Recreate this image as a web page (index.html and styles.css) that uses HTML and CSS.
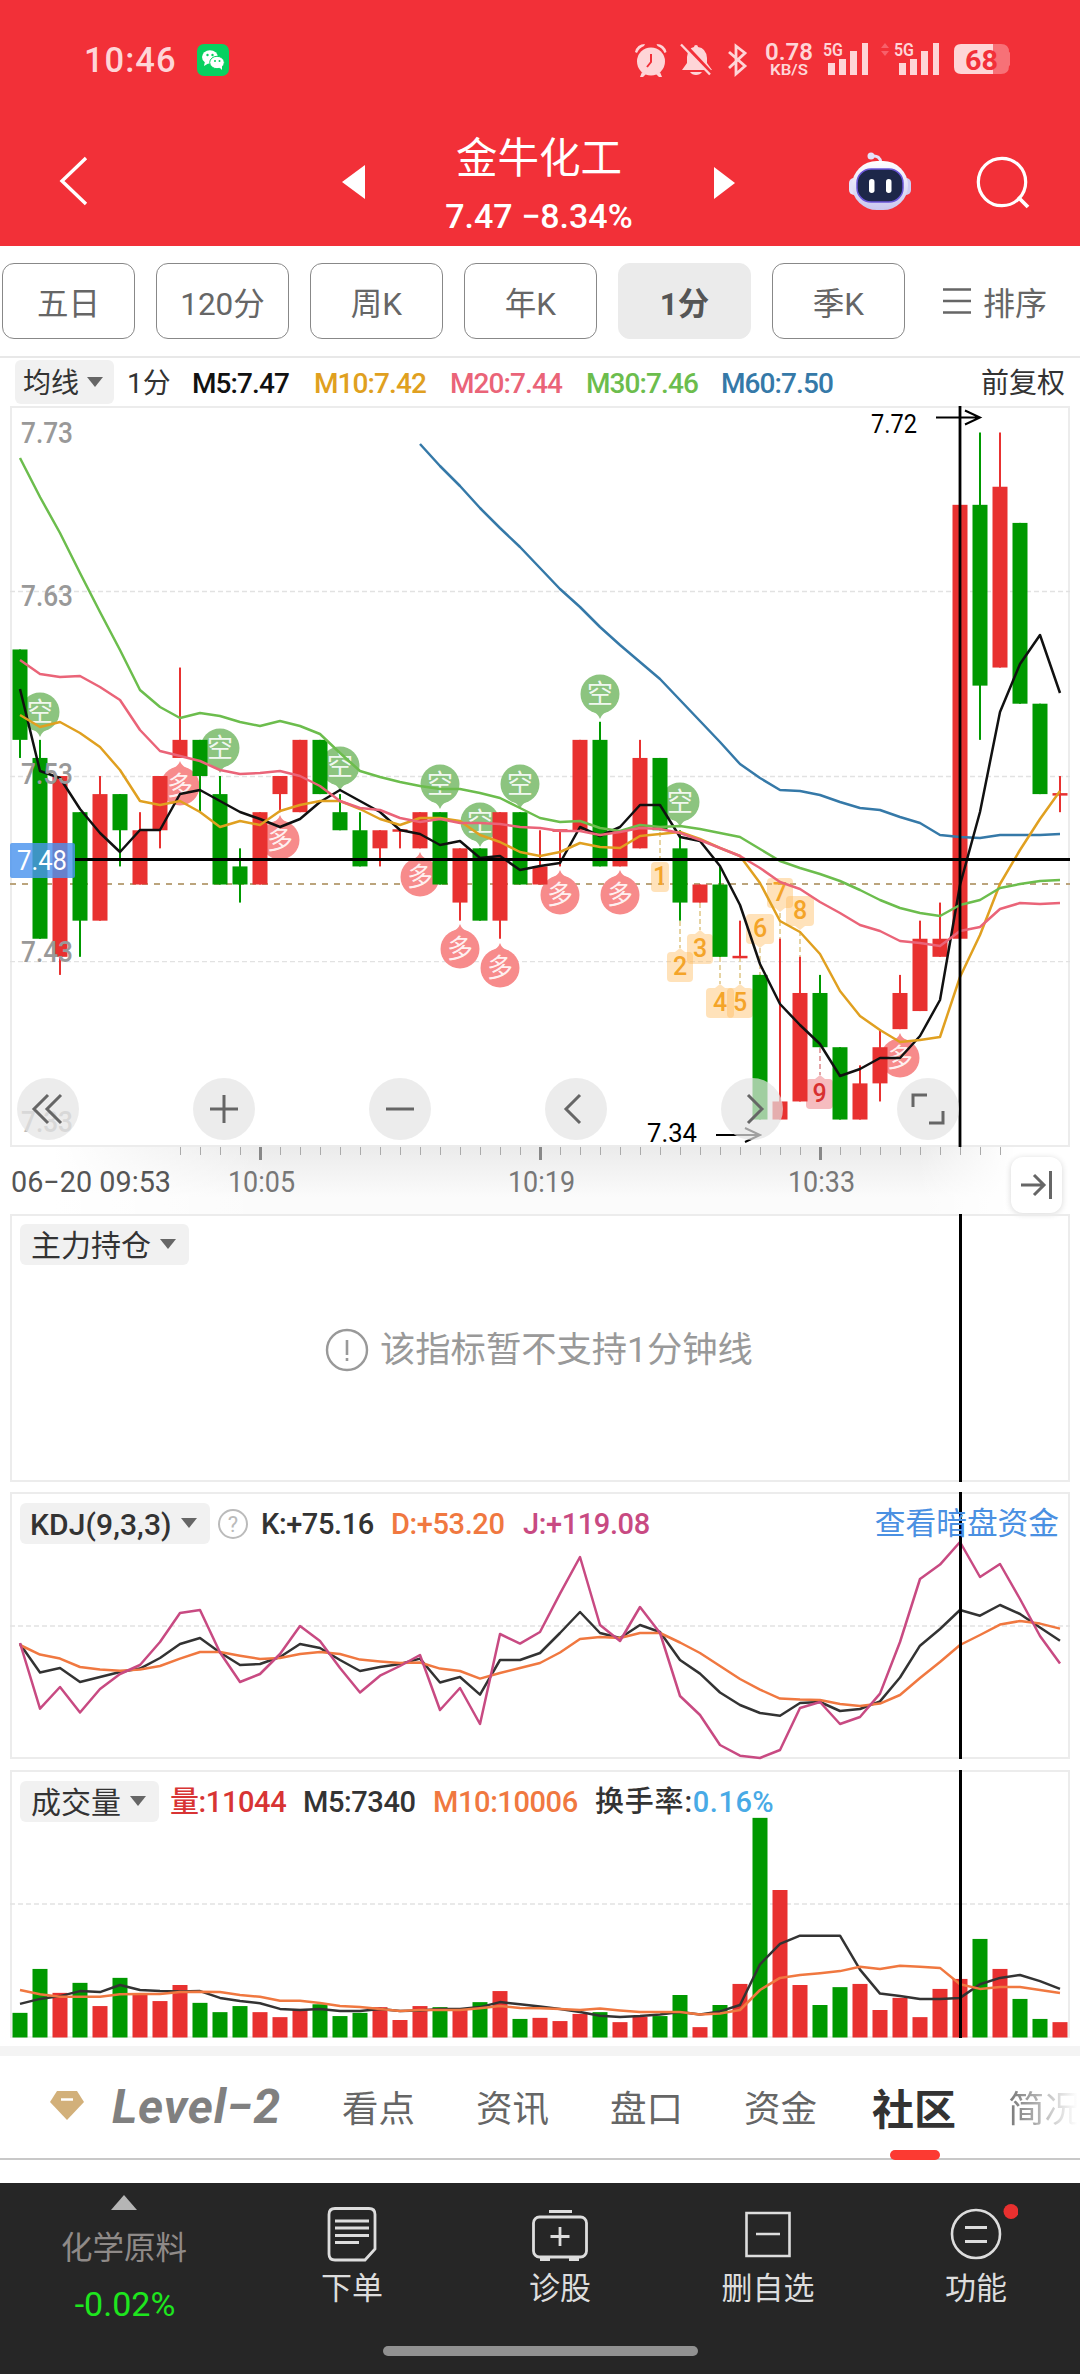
FILE: index.html
```html
<!DOCTYPE html>
<html lang="zh-CN">
<head>
<meta charset="utf-8">
<title>金牛化工 7.47</title>
<link rel="stylesheet" href="styles.css">
</head>
<body>
<div class="app">
  <header class="header">
    <div class="status">
      <span class="clock">10:46</span>
      <svg class="wechat" width="32" height="32" viewBox="0 0 32 32"><rect width="32" height="32" rx="7" fill="#07d160"/><ellipse cx="13" cy="13" rx="8" ry="6.8" fill="#fff"/><path d="M8 17l-1 5 5-3z" fill="#fff"/><ellipse cx="20" cy="18.500" rx="7.300" ry="6.200" fill="#fff" stroke="#07d160" stroke-width="1"/><path d="M22 23l3 3 0-5z" fill="#fff"/><g fill="#07d160"><circle cx="10.500" cy="11" r="1.200"/><circle cx="15.500" cy="11" r="1.200"/><circle cx="18" cy="17" r="1"/><circle cx="22.500" cy="17" r="1"/></g></svg>
      <svg class="signals" width="380" height="44" viewBox="630 40 380 44">
        <g fill="#fed5d7" stroke="none">
          <circle cx="651" cy="62.500" r="14"/>
          <path d="M635 53q2-8 10-8l-1 2q-5 2-7 7zM666.500 53q-2-8-10-8l1 2q5 2 7 7zM642 73l-2 5 3 0 3-3zM660 73l2 5-3 0-3-3z"/>
          <path d="M651 55v8l-4 5" fill="none" stroke="#f23038" stroke-width="2"/>
          <path d="M682 71l5-7v-6q1-9 7-10 0-2 2-2t2 2q8 1 9 11v5l5 7zM690 73h12q-2 3-6 3t-6-3z"/>
          <path d="M683 44l30 32" stroke="#f23038" stroke-width="4"/>
          <path d="M681 45.500l29 30" stroke="#fed5d7" stroke-width="2.400"/>
          <path d="M729 53l16 14-9 8V47l9 7-16 15" fill="none" stroke="#fed5d7" stroke-width="2.800"/>
          <text x="765" y="61" font-size="24" font-weight="600" textLength="48" lengthAdjust="spacingAndGlyphs">0.78</text>
          <text x="770" y="76" font-size="15.500" font-weight="600" textLength="38" lengthAdjust="spacingAndGlyphs">KB/S</text>
          <text x="823" y="57" font-size="18" font-weight="600" textLength="20" lengthAdjust="spacingAndGlyphs">5G</text>
          <path d="M828 64h7v12h-7zM839 60h7v16h-7zM850 52h7v24h-7zM862 44h6v32h-6z"/>
          <text x="894" y="57" font-size="18" font-weight="600" textLength="20" lengthAdjust="spacingAndGlyphs">5G</text>
          <path d="M899 64h7v12h-7zM910 60h7v16h-7zM921 52h7v24h-7zM933 44h6v32h-6z"/>
          <path d="M881 49l4-5 4 5zM881 52h8l-4 5z" fill="#f7606a"/>
          <path d="M962 45h39q8 0 8 8 2 1 2 3v8q0 2-2 3 0 8-8 8h-8z" fill="#f77177"/>
          <path d="M961 45h32v30h-32q-7 0-7-7V52q0-7 7-7z"/>
          <text x="965" y="70.500" font-size="28" font-weight="700" fill="#f23038" textLength="33" lengthAdjust="spacingAndGlyphs">68</text>
        </g>
      </svg>
    </div>
    <div class="titlebar">
      <svg class="back" width="32" height="52" viewBox="0 0 32 52"><path d="M28 3L4 26 28 49" fill="none" stroke="#fff" stroke-width="3.400"/></svg>
      <svg class="prev" width="23" height="34" viewBox="0 0 23 34"><path d="M0 17L23 0v34z" fill="#fff"/></svg>
      <div class="stock"><div class="stock-name">金牛化工</div><div class="stock-price">7.47 −8.34%</div></div>
      <svg class="next" width="21" height="32" viewBox="0 0 21 32"><path d="M21 16L0 0v32z" fill="#fff"/></svg>
      <svg class="robot" width="64" height="60" viewBox="0 0 64 60">
        <defs><linearGradient id="shell" x2="0" y2="1"><stop offset="0" stop-color="#fff"/><stop offset="1" stop-color="#c9c6ef"/></linearGradient></defs>
        <path d="M24 5q8-1 9 7" fill="none" stroke="#e4e2fa" stroke-width="3"/><circle cx="23" cy="5" r="3.500" fill="#e4e2fa"/>
        <rect x="1" y="27" width="10" height="17" rx="5" fill="#e4e2fa"/><rect x="53" y="27" width="10" height="17" rx="5" fill="#cfcdf3"/>
        <rect x="4" y="10" width="56" height="49" rx="25" fill="url(#shell)"/>
        <rect x="9" y="18" width="46" height="33" rx="14" fill="#1d2749" stroke="#6a56d8" stroke-width="1.500"/>
        <rect x="21" y="28" width="5.500" height="14" rx="2.700" fill="#fff"/><rect x="38" y="28" width="5.500" height="14" rx="2.700" fill="#fff"/>
      </svg>
      <svg class="search" width="54" height="54" viewBox="0 0 54 54"><circle cx="26" cy="26" r="23.700" fill="none" stroke="#fff" stroke-width="3.200"/><path d="M42 41l10 10" stroke="#fff" stroke-width="3.800"/></svg>
    </div>
  </header>

  <nav class="periods">
    <button class="period">五日</button>
    <button class="period">120分</button>
    <button class="period">周K</button>
    <button class="period">年K</button>
    <button class="period active">1分</button>
    <button class="period">季K</button>
    <div class="sort"><svg width="28" height="26" viewBox="0 0 28 26"><path d="M0 1.500h28M0 13h28M0 24.500h28" stroke="#666" stroke-width="2.400"/></svg>排序</div>
  </nav>

  <div class="legend ma-legend">
    <span class="pill">均线<i class="caret"></i></span>
    <span class="minute">1分</span>
    <span class="num m5">M5:7.47</span>
    <span class="num m10">M10:7.42</span>
    <span class="num m20">M20:7.44</span>
    <span class="num m30">M30:7.46</span>
    <span class="num m60">M60:7.50</span>
    <span class="adjust">前复权</span>
  </div>

  <section class="panel-main"><svg id="candles" width="1080" height="742" viewBox="0 405 1080 742"></svg></section>

  <div class="axis">
    <svg width="1080" height="66" viewBox="0 1147 1080 66" id="axis"></svg>
    <button class="to-end"><svg width="32" height="28" viewBox="0 0 32 28"><path d="M0 14h22M13 4l10 10-10 10M29.500 0v28" fill="none" stroke="#666" stroke-width="3"/></svg></button>
  </div>

  <section class="panel holding">
    <div class="legend"><span class="pill">主力持仓<i class="caret"></i></span></div>
    <div class="empty"><svg width="44" height="44" viewBox="0 0 44 44"><circle cx="22" cy="22" r="20" fill="none" stroke="#999" stroke-width="2.400"/><path d="M22 12v15M22 30v3" stroke="#999" stroke-width="2.600"/></svg>该指标暂不支持1分钟线</div>
    <div class="crosshair"></div>
  </section>

  <section class="panel kdj">
    <svg class="plot" id="kdj" width="1060" height="268" viewBox="10 1492 1060 268"></svg>
    <div class="legend kdj-legend">
      <span class="pill num">KDJ(9,3,3)<i class="caret"></i></span>
      <span class="help">?</span>
      <span class="num">K:+75.16</span>
      <span class="num orange">D:+53.20</span>
      <span class="num magenta">J:+119.08</span>
    </div>
    <div class="crosshair"></div>
    <a class="link">查看暗盘资金</a>
  </section>

  <section class="panel volume">
    <svg class="plot" id="volume" width="1060" height="268" viewBox="10 1770 1060 268"></svg>
    <div class="legend vol-legend">
      <span class="pill">成交量<i class="caret"></i></span>
      <span class="num red">量:11044</span>
      <span class="num">M5:7340</span>
      <span class="num orange">M10:10006</span>
      <span class="num turnover">换手率:<b>0.16%</b></span>
    </div>
    <div class="crosshair"></div>
  </section>

  <nav class="tabs">
    <svg class="gem" width="36" height="32" viewBox="0 0 36 32"><path d="M8 1h20l7 11-17 18L1 12z" fill="#d2b07a"/><path d="M12 9.500h12" stroke="#fff" stroke-width="2.500"/></svg>
    <span class="level">Level−2</span>
    <span>看点</span><span>资讯</span><span>盘口</span><span>资金</span>
    <span class="current">社区</span>
    <span class="fade">简况</span>
  </nav>

  <footer class="dock">
    <div class="dock-row">
      <div class="sector"><i class="up"></i><span>化学原料</span><b>-0.02%</b></div>
      <div class="item"><svg width="60" height="60" viewBox="0 0 60 60"><path d="M13 4.500h34q6 0 6 6V45L43 56H13q-6 0-6-6V10.500q0-6 6-6zM13 17h34M13 24h34M13 31.500h34M13 38.500h24" fill="none" stroke="#ddd" stroke-width="2.800"/></svg>下单</div>
      <div class="item"><svg width="60" height="60" viewBox="0 0 60 60"><rect x="3.500" y="13" width="53" height="40" rx="6" fill="none" stroke="#ddd" stroke-width="2.800"/><path d="M19 7.500h23M30 23v19M20.500 32.500h19M10 55.500h10M39 55.500h10" stroke="#ddd" stroke-width="2.800"/></svg>诊股</div>
      <div class="item"><svg width="60" height="60" viewBox="0 0 60 60"><path d="M8.500 9h43v43h-43zM18 30h24" fill="none" stroke="#ddd" stroke-width="2.600"/></svg>删自选</div>
      <div class="item"><svg width="84" height="60" viewBox="-12 0 84 60"><circle cx="30" cy="30" r="24" fill="none" stroke="#ddd" stroke-width="2.600"/><path d="M19 23.500h22M19 37.500h22" stroke="#ddd" stroke-width="2.800"/><circle cx="65" cy="7.500" r="7.500" fill="#e8302f"/></svg>功能</div>
    </div>
    <div class="home"></div>
  </footer>
</div>
<script src="charts.js"></script>
</body>
</html>
```
FILE: styles.css
```css
* { box-sizing: border-box; }
body { margin: 0; background: #fff; font-family: Roboto, "Noto Sans CJK SC", sans-serif; color: #333; }
svg { display: block; flex: none; }
button { font: inherit; padding: 0; }
.app { width: 1080px; height: 2374px; display: flex; flex-direction: column; overflow: hidden; }

.header { height: 246px; background: #f23038; color: #fff; flex: none; }
.status { height: 120px; display: flex; align-items: center; padding: 0 70px 0 84px; }
.clock { width: 113px; font-size: 34.500px; font-weight: 500; color: #fed5d7; letter-spacing: 1px; }
.signals { margin-left: auto; margin-top: 2px; }
.titlebar { height: 126px; display: flex; align-items: flex-start; }
.back { margin: 35px 0 0 58px; }
.prev { margin: 45px 0 0 252px; }
.stock { width: 352px; text-align: center; margin-left: -2px; }
.stock-name { font-size: 41.500px; line-height: 60px; margin-top: 9px; font-weight: 400; }
.stock-price { font-size: 34px; line-height: 44px; margin-top: 5px; font-weight: 500; }
.next { margin: 47px 0 0 -1px; }
.robot { margin: 31px 0 0 113px; }
.search { margin: 36px 0 0 64px; }

.periods { height: 112px; flex: none; display: flex; gap: 21px; padding: 17px 0 0 2px; border-bottom: 2px solid #e8e8e8; }
.period { width: 133px; height: 76px; border: 1px solid #888; border-radius: 12px; background: #fff; color: #666; font-size: 31.500px; }
.period.active { background: #ebebeb; border-color: #ebebeb; color: #555; font-weight: 700; }
.sort { display: flex; align-items: center; height: 76px; gap: 12px; font-size: 32px; color: #666; margin-left: 17px; }

.legend { display: grid; align-items: center; font-size: 30px; line-height: 41px; white-space: nowrap; }
.pill { display: flex; align-items: center; gap: 9px; background: #f1f1f1; border-radius: 6px; justify-self: start; height: 41px; padding: 2px 13px 0 11px; }
.caret { border: 8px solid transparent; border-top: 10px solid #666; border-bottom: 0; margin-top: -3px; }
.num { font-weight: 500; font-size: 29px; letter-spacing: -.4px; padding-top: 2px; }
.ma-legend { height: 47px; flex: none; grid-template-columns: 112px 65px 122px 136px 136px 135px 260px 1fr; padding-left: 15px; font-size: 28px; }
.ma-legend .pill { height: 44px; padding: 3px 11px 0 8px; gap: 8px; }
.ma-legend .num { font-size: 28px; letter-spacing: -.9px; padding-top: 4px; }
.minute, .adjust { padding-top: 3px; }
.m5 { color: #111; } .m10 { color: #e0a020; } .m20 { color: #ea6478; } .m30 { color: #6cbd4d; } .m60 { color: #3579a8; }

.panel-main { height: 742px; flex: none; }
.axis { height: 67px; flex: none; position: relative; background: linear-gradient(90deg, #fff 5%, transparent 25%, transparent 85%, #fff 94%), linear-gradient(#ebebeb, #fbfbfb 75%); }
.to-end { position: absolute; left: 1011px; top: 10px; width: 51px; height: 56px; border: 0; border-radius: 12px; background: #fff; box-shadow: 0 1px 6px rgba(0,0,0,.16); display: flex; align-items: center; justify-content: center; }
.panel { position: relative; flex: none; margin: 0 10px 11px; height: 267px; border: 2px solid #ececec; }
.panel .plot { position: absolute; left: -2px; top: -2px; }
.panel .legend { position: relative; padding: 8px 0 0 8px; justify-content: start; }
.crosshair { position: absolute; left: 947px; top: -2px; bottom: -2px; width: 3px; background: #000; }
.holding { height: 268px; margin-bottom: 10px; }
.empty { display: flex; align-items: center; gap: 11px; font-size: 35.300px; color: #999; margin: 60px 0 0 313px; line-height: 50px; }
.panel .kdj-legend { grid-template-columns: 198px 43px 130px 132px 352px; }
.panel .kdj-legend .pill { font-size: 30px; letter-spacing: .1px; padding-left: 10px; }
.panel .vol-legend { grid-template-columns: 150px 133px 130px 162px 200px; }
.help { width: 30px; height: 30px; border: 2px solid #bbb; border-radius: 50%; font-size: 22px; line-height: 27px; text-align: center; color: #bbb; }
.orange { color: #f07840; } .magenta { color: #c84a82; } .red { color: #d83434; }
.link { position: absolute; right: 9px; top: 9px; color: #4a90e2; font-size: 30.700px; line-height: 41px; }
.volume { margin-bottom: 0; height: 268px; border-bottom-color: #f0f0f0; }
.vol-legend .turnover { letter-spacing: .8px; }
.volume b { color: #48aae6; font-weight: 500; letter-spacing: .5px; }

.tabs { border-top: 10px solid #f4f4f4; margin-top: 8px; height: 114px; flex: none; display: flex; align-items: center; padding: 0 0 2px 49px; font-size: 36.500px; color: #666; border-bottom: 2px solid #c8c8c8; white-space: nowrap; }
.tabs span + span { margin-left: 61px; }
.tabs .level { margin-left: 27px; width: 171px; font-weight: 700; font-style: italic; font-size: 48px; color: #808080; letter-spacing: .8px; }
.tabs .current { position: relative; margin-left: 55px; color: #333; font-size: 42px; font-weight: 700; }
.tabs .current::after { content: ""; position: absolute; left: 18px; bottom: -23px; width: 50px; height: 10px; border-radius: 5px; background: #fc3a32; }
.tabs .fade { margin-left: 52px; background: linear-gradient(90deg, #777, #fff 95%); background-clip: text; -webkit-background-clip: text; color: transparent; }

.dock { margin-top: 23px; height: 191px; flex: none; background: #262626; color: #ddd; display: flex; flex-direction: column; align-items: center; }
.dock-row { display: flex; width: 1080px; height: 163px; }
.sector { width: 248px; display: flex; flex-direction: column; align-items: center; padding-top: 12px; color: #8f8a88; font-size: 31.500px; }
.up { border: 13px solid transparent; border-bottom: 15px solid #b5b5b5; border-top: 0; }
.sector span { line-height: 44px; margin-top: 17px; }
.sector b { font-weight: 400; font-size: 34px; line-height: 40px; margin-top: 13px; margin-left: 2px; color: #1ee61e; }
.item { width: 208px; display: flex; flex-direction: column; align-items: center; padding-top: 21px; font-size: 31px; line-height: 50px; }
.home { width: 315px; height: 10px; border-radius: 5px; background: #919191; }
```
FILE: charts.js
```js
const RED = '#e83130', GREEN = '#009900';
const X = i => 20 + 20 * i;
const priceY = p => 432.5 + (772 - p) * 18.08;
const line = (ys, color, start = 0, map = y => y) =>
  `<polyline points="${ys.map((y, i) => X(i + start) + ',' + map(y).toFixed(1)).join(' ')}" fill="none" stroke="${color}" stroke-width="2.500" stroke-linejoin="round"/>`;
const rect = (x, y, w, h, fill) => `<rect x="${x}" y="${y}" width="${w}" height="${h}" fill="${fill}"/>`;
const hline = (y, color = '#e2e2e2', dash = '5 3', w = 1.3) =>
  `<path d="M10 ${y}H1070" stroke="${color}" stroke-dasharray="${dash}" stroke-width="${w}"/>`;
const label = (x, y, size, width, text, fill, weight = 400) =>
  `<text x="${x}" y="${y}" font-size="${size}" font-weight="${weight}" fill="${fill}" textLength="${width}" lengthAdjust="spacingAndGlyphs">${text}</text>`;

// [colour, body top, body bottom, high, low] in cents over 7.00
const candles = [
  'G 60 55 60 54','G 54 44 55 44','R 53 43 53 42','G 51 45 51 43','R 52 45 53 45','G 52 50 52 48','R 50 47 51 47','R 53 50 53 49',
  'R 55 54 59 54','G 55 53 55 51','G 52 47 53 47','G 48 47 49 46','R 51 47 51 47','R 53 52 53 51','R 55 51 55 51','G 55 52 55 52',
  'G 51 50 52 50','G 50 48 51 48','R 50 49 50 48','R 50 50 50 49','R 51 49 51 49','G 51 47 51 47','R 49 46 49 45','G 49 45 49 45',
  'R 51 45 51 44','G 51 47 51 47','R 48 47 50 47','R 50 50 50 48','R 55 50 55 50','G 55 48 56 48','R 50 48 50 48','R 54 49 55 49',
  'G 54 50 54 50','G 49 46 50 45','R 47 46 47 46','G 47 43 48 43','R 43 43 45 43','G 42 34 42 34','R 35 34 44 34','R 41 35 43 35',
  'G 41 38 42 38','G 38 34 38 34','R 36 34 37 34','R 38 36 39 35','R 41 39 42 39','R 44 40 45 40','R 44 43 46 43','R 68 44 68 44',
  'G 68 58 72 55','R 69 59 72 59','G 67 57 67 57','G 57 52 57 52','R 52 52 53 51'
].map(s => s.split(' ').map((v, i) => i ? 700 + +v : v));

const ma5 = [689,771,778,809,833,852,830,830,794,790,801,812,819,827,819,802,790,801,812,830,834,845,841,858,856,870,866,863,827,836,827,805,805,837,841,866,905,964,1004,1025,1044,1076,1069,1058,1058,1036,1000,885,812,712,664,635,693];
const ma10 = [715,727,722,733,747,770,801,805,801,812,827,821,825,811,805,801,801,809,819,825,818,818,821,835,842,852,856,852,843,847,848,836,834,832,839,848,856,883,921,932,954,991,1016,1030,1042,1040,1037,977,935,884,850,819,791];
const ma20 = [660,674,677,676,687,700,730,751,756,761,770,774,773,771,776,786,801,808,810,818,822,819,823,823,824,827,828,831,831,835,832,828,829,833,840,848,856,868,882,889,902,913,925,931,941,943,946,931,927,909,903,904,903];
const ma30 = [458,497,533,573,612,650,690,707,718,713,716,722,726,721,726,734,753,771,777,782,786,789,789,793,798,808,818,822,821,828,831,825,827,826,829,833,837,849,861,868,874,881,890,900,908,913,916,905,900,888,884,881,880];
const ma60 = [444,466,486,508,528,547,568,589,607,627,645,662,679,700,721,742,764,778,790,791,795,802,808,810,817,823,835,837,838,835,835,835,834];

const bear = [[1,712],[10,748],[16,766],[21,784],[25,784],[29,694],[23,822],[33,802]];
const bull = [[8,786],[13,840],[20,877],[22,949],[24,968],[27,895],[30,895],[44,1058]];
const pin = (i, y, dir, fill, t) => `<g transform="translate(${X(i)} ${y})"><circle r="19.500" fill="${fill}"/><path d="M-9 ${dir * 17}Q-2 ${dir * 19} 0 ${dir * 25}Q2 ${dir * 19} 9 ${dir * 17}z" fill="${fill}"/><text y="9" font-size="26" text-anchor="middle" fill="#fff" fill-opacity=".9">${t}</text></g>`;

// [number, box x, box y, width, stem x, stem from, stem to, tip direction]
const counts = [[1,651,862,18,660,832,862,0],[2,667,952,26,680,921,948,-1],[3,687,934,26,700,903,930,-1],[4,706,988,28,720,957,984,-1],
  [5,727,988,26,740,957,984,-1],[6,746,914,28,760,948,975,1],[7,767,878,26,780,913,939,1],[8,786,896,28,800,931,957,1],[9,806,1079,27,820,1048,1075,-1]];
const count = ([n, x, y, w, sx, a, b, tip]) => {
  const hot = n === 9, fill = hot ? '#f6bcbf' : 'rgba(255,185,90,.42)';
  const nose = tip < 0 ? `M${sx - 5} ${y}l5-4 5 4z` : tip > 0 ? `M${sx - 5} ${y + 30}l5 4 5-4z` : '';
  return `<path d="M${sx} ${a}V${b}" stroke="${hot ? '#e09a9c' : '#e4cf98'}" stroke-width="1.800" stroke-dasharray="5 3"/>
  <rect x="${x}" y="${y}" width="${w}" height="30" rx="4" fill="${fill}"/><path d="${nose}" fill="${fill}"/>
  <text x="${x + w / 2}" y="${y + 23}" font-size="25" font-weight="500" text-anchor="middle" fill="${hot ? '#d83030' : '#f4a428'}">${n}</text>`;
};

let s = '<rect x="11" y="407" width="1058" height="739" fill="none" stroke="#ececec" stroke-width="2"/>';
s += [591.5, 776.5, 961.7].map(y => hline(y)).join('') + hline(884, '#bba47c', '6 6', 1.8);
s += bear.map(([i, y]) => pin(i, y, 1, '#8cc47f', '空')).join('') + bull.map(([i, y]) => pin(i, y, -1, '#f78b8b', '多')).join('');
s += counts.map(count).join('');
candles.forEach(([c, top, bot, hi, lo], i) => {
  const f = c === 'R' ? RED : GREEN;
  s += rect(X(i) - 1, priceY(hi), 2, priceY(lo) - priceY(hi), f);
  s += top === bot ? rect(X(i) - 7.5, priceY(top) - 1, 15, 2.5, f) : rect(X(i) - 7.5, priceY(top), 15, priceY(bot) - priceY(top), f);
});
s += line(ma60, '#3579a8', 20) + line(ma5, '#111') + line(ma10, '#e0a020') + line(ma30, '#6cbd4d') + line(ma20, '#ea6478');
[[443, '7.73'], [605.5, '7.63'], [783.5, '7.53'], [961.5, '7.43']].forEach(([y, t]) => s += label(21, y, 29.5, 52, t, '#999', 500));
s += label(21, 1131.5, 29.5, 52, '7.33', '#bbb', 500);
s += label(871, 433, 25.5, 46, '7.72', '#000') + '<path d="M936 417.500H979M965 410.500l15 7-15 7" fill="none" stroke="#000" stroke-width="2"/>';
s += label(647, 1142, 26, 50, '7.34', '#000') + '<path d="M716 1135H759M745 1128l15 7-15 7" fill="none" stroke="#000" stroke-width="2"/>';
s += '<path d="M75 859.500H1070M960 406V1147" stroke="#000" stroke-width="2.800"/>';
s += '<rect x="10" y="843" width="65" height="35" rx="2" fill="#4a94ee" fill-opacity=".82"/>' + label(17, 870, 27, 50, '7.48', '#fff');
const icons = ['M48 1095l-14 14 14 14M61 1095l-14 14 14 14', 'M210 1109h28M224 1095v28', 'M386 1109h28', 'M580 1095l-14 14 14 14', 'M748 1095l14 14-14 14', 'M913 1107v-12h14M943 1111v12h-14'];
icons.forEach((d, k) => s += `<circle cx="${48 + 176 * k}" cy="1109" r="31" fill="rgba(228,228,228,.7)"/><path d="${d}" fill="none" stroke="#666" stroke-width="3"/>`);
document.getElementById('candles').innerHTML = s;

s = '';
for (let x = 180; x <= 1000; x += 20) {
  const major = (x - 260) % 280 === 0;
  s += rect(x - (major ? 1 : 0), 1147, major ? 3 : 1, major ? 13 : 8, major ? '#888' : '#aaa');
}
s += label(11, 1192, 29, 160, '06−20 09:53', '#555', 400) + label(228, 1192, 29, 67, '10:05', '#777') + label(508, 1192, 29, 67, '10:19', '#777') + label(788, 1192, 29, 67, '10:33', '#777');
document.getElementById('axis').innerHTML = s;

const k = [1644,1672.5,1668,1682,1677,1672,1668.6,1658,1644,1638,1652.5,1665,1664,1657,1644,1648,1660,1671,1667,1664,1658.6,1682.5,1677,1694.6,1660,1660,1653,1633,1612,1633,1638,1625,1632,1660,1673.6,1692.5,1705,1713,1715.7,1703,1702,1711,1709,1701.4,1677.5,1645.7,1629,1610,1615.7,1605,1614,1627.5,1640.7];
const d = [1645,1654.6,1658.6,1667,1669.6,1670.7,1669.6,1666,1658.6,1652,1652,1655.7,1659,1658,1654,1652,1654,1659.6,1661.4,1663,1662.5,1668.6,1671,1678.6,1673,1668,1663,1652.5,1639,1637,1638,1633,1633,1642.5,1653,1666,1679,1689.6,1698.6,1699.6,1700,1704,1706,1703.6,1695,1678,1662,1645,1635,1624.6,1621,1623.6,1628.6];
const j = [1643,1708.6,1687,1712.5,1689,1674,1665,1642,1613,1610,1652.5,1682,1674,1654,1626,1641,1668,1692.5,1675.7,1666,1655,1710,1688,1724,1634,1643.6,1632,1593.6,1557,1625,1641,1607,1633,1696,1715,1745,1755.7,1758,1750,1708,1702,1724,1717,1693.6,1642,1579,1564.6,1542,1577,1564,1599,1636,1663.6];
document.getElementById('kdj').innerHTML = hline(1626) + line(k, '#333') + line(d, '#f07840') + line(j, '#c84a82');

const vol = 'G1464 G1341 R1408 G1380 R1445 G1366 R1414 R1431 R1386 G1436 G1462 G1445 R1462 R1476 R1453 G1440 G1473 G1464 R1448 R1484 R1445 G1448 R1455 G1434 R1403 G1481 R1478 R1487 R1467 G1462 R1490 R1475 G1473 G1414 R1504 G1442 R1383 G918 R1120 R1386 G1442 G1392 R1383 R1456 R1422 R1476 R1397 R1369 G1257 R1341 G1425 G1481 R1490'.split(' ');
const v5 = [1439,1425,1417,1403,1406,1386,1400,1403,1404,1403,1422,1431,1437,1453,1456,1453,1459,1459,1453,1459,1457,1453,1453,1448,1434,1440,1446,1453,1462,1472,1476,1473,1469,1462,1469,1460,1442,1328,1271,1248,1248,1248,1343,1410,1417,1425,1425,1422,1384,1366,1358,1375,1397];
const v10 = [1400,1412,1419,1419,1419,1412,1411,1411,1406,1405,1406,1414,1419,1430,1430,1436,1445,1448,1453,1459,1456,1456,1456,1451,1445,1450,1451,1453,1456,1452,1457,1462,1462,1462,1469,1466,1456,1400,1366,1358,1353,1347,1335,1341,1332,1335,1338,1384,1397,1392,1392,1400,1408];
const volY = v => 1490 + v / 2.8;
s = hline(1904);
vol.forEach((v, i) => { const y = volY(+v.slice(1)); s += rect(X(i) - 7.5, y, 15, 2037.5 - y, v[0] === 'R' ? RED : GREEN); });
document.getElementById('volume').innerHTML = s + line(v5, '#333', 0, volY) + line(v10, '#f07840', 0, volY);
```
